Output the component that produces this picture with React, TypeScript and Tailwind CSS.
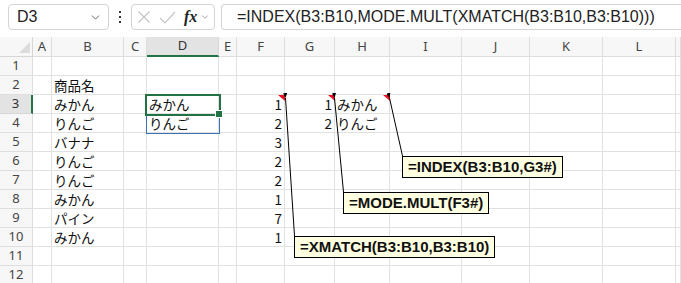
import { ChevronDown } from 'lucide-react'

const COLS = ['A', 'B', 'C', 'D', 'E', 'F', 'G', 'H', 'I', 'J', 'K', 'L', '']

type Cell = { t: string; num?: boolean }
const DATA: Record<number, Record<string, Cell>> = {
  2: { B: { t: '商品名' } },
  3: { B: { t: 'みかん' }, D: { t: 'みかん' }, F: { t: '1', num: true }, G: { t: '1', num: true }, H: { t: 'みかん' } },
  4: { B: { t: 'りんご' }, D: { t: 'りんご' }, F: { t: '2', num: true }, G: { t: '2', num: true }, H: { t: 'りんご' } },
  5: { B: { t: 'バナナ' }, F: { t: '3', num: true } },
  6: { B: { t: 'りんご' }, F: { t: '2', num: true } },
  7: { B: { t: 'りんご' }, F: { t: '2', num: true } },
  8: { B: { t: 'みかん' }, F: { t: '1', num: true } },
  9: { B: { t: 'パイン' }, F: { t: '7', num: true } },
  10: { B: { t: 'みかん' }, F: { t: '1', num: true } },
}

const cellFont = { fontFamily: '"Noto Sans CJK JP", "Noto Sans", sans-serif' }
const uiFont = { fontFamily: '"Noto Sans", "Open Sans", sans-serif' }

function FormulaBar() {
  return (
    <div className="h-[37px] flex items-start pt-[4px] bg-white" style={uiFont}>
      {/* name box */}
      <div className="ml-[8px] w-[101px] h-[26px] border border-[#d4d4d4] rounded-[4px] flex items-center pl-[8px] pr-[6px]">
        <span className="text-[16px] text-[#222] flex-1 leading-none" style={{ fontFamily: '"Liberation Sans", sans-serif' }}>D3</span>
        <ChevronDown className="w-[13px] h-[13px] text-[#555]" strokeWidth={1.6} />
      </div>
      {/* kebab */}
      <div className="w-[22px] h-[26px] flex flex-col items-center justify-center gap-[3px]">
        <div className="w-[2px] h-[2px] bg-[#333]" />
        <div className="w-[2px] h-[2px] bg-[#333]" />
        <div className="w-[2px] h-[2px] bg-[#333]" />
      </div>
      {/* fx box */}
      <div className="w-[84px] h-[26px] border border-[#d4d4d4] rounded-[4px] flex items-center pl-[5px]">
        <svg width="14" height="14" viewBox="0 0 14 14" className="mr-[8px]">
          <path d="M1.5 1.5 L12.5 12.5 M12.5 1.5 L1.5 12.5" stroke="#c4c4c4" strokeWidth="1.2" fill="none" />
        </svg>
        <svg width="17" height="13" viewBox="0 0 17 13" className="mr-[8px]">
          <path d="M1 7 L6 12 L16 1" stroke="#c4c4c4" strokeWidth="1.2" fill="none" />
        </svg>
        <span className="text-[16px] italic font-bold text-[#222] leading-none" style={{ fontFamily: '"Liberation Serif", serif' }}>fx</span>
        <ChevronDown className="w-[10px] h-[10px] text-[#777] ml-[3px]" strokeWidth={1.6} />
      </div>
      {/* formula */}
      <div className="ml-[6px] flex-1 h-[26px] border border-[#d4d4d4] border-r-0 rounded-l-[4px] flex items-center pl-[15px]">
        <span className="text-[16px] text-[#222] whitespace-nowrap" style={{ fontFamily: '"Liberation Sans", sans-serif' }}>
          =INDEX(B3:B10,MODE.MULT(XMATCH(B3:B10,B3:B10)))
        </span>
      </div>
    </div>
  )
}

function Grid() {
  const rows = Array.from({ length: 12 }, (_, i) => i + 1)
  return (
    <div className="grid grid-cols-[33px_19px_72px_23px_72px_18px_48px_50px_55px_72px_68px_73px_73px_1fr] grid-rows-[20px_repeat(12,19px)] overflow-hidden">
      {/* corner */}
      <div className="bg-[#f7f7f7] border-r border-b border-[#d6d6d6] relative">
        <div className="absolute right-[2px] bottom-[3px] w-0 h-0 border-l-[11px] border-l-transparent border-b-[11px] border-b-[#dcdcdc]" />
      </div>
      {COLS.map(c => (
        <div
          key={c || 'M'}
          className={
            c === 'D'
              ? 'bg-[#e3e3e3] border-r border-[#d6d6d6] border-b-2 border-b-[#217346] flex items-center justify-center text-[13px] text-[#333]'
              : 'bg-[#f7f7f7] border-r border-b border-[#dedede] flex items-center justify-center text-[13px] text-[#444]'
          }
          style={uiFont}
        >
          {c}
        </div>
      ))}
      {rows.map(r => (
        <Row key={r} r={r} />
      ))}
    </div>
  )
}

function Row({ r }: { r: number }) {
  const active = r === 3
  return (
    <>
      <div
        className={
          active
            ? 'bg-[#e3e3e3] border-r-2 border-r-[#217346] border-b border-b-[#d6d6d6] flex items-center justify-center text-[13px] text-[#333]'
            : 'bg-[#f7f7f7] border-r border-b border-[#dedede] flex items-center justify-center text-[13px] text-[#444]'
        }
        style={uiFont}
      >
        {r}
      </div>
      {COLS.map(c => {
        const cell = DATA[r]?.[c]
        return (
          <div
            key={c || 'M'}
            className={`relative border-r border-b border-[#e1e1e1] flex items-center whitespace-nowrap text-[13.5px] text-[#111] ${cell?.num ? 'justify-end pr-[2px]' : 'pl-[2px]'}`}
            style={cellFont}
          >
            {cell?.t}
            {r === 3 && (c === 'F' || c === 'G' || c === 'H') && (
              <div className="absolute right-[-1px] top-0 w-0 h-0 border-l-[7px] border-l-transparent border-t-[6px] border-t-[#e81123]" />
            )}
          </div>
        )
      })}
    </>
  )
}

function Comment({ text, className }: { text: string; className: string }) {
  return (
    <div
      className={`absolute h-[22px] bg-[#ffffe1] border border-black flex items-center pl-[5px] pr-[5px] text-[15px] font-bold text-[#111] whitespace-nowrap ${className}`}
      style={{ fontFamily: '"Liberation Sans", sans-serif' }}
    >
      {text}
    </div>
  )
}

export default function App() {
  return (
    <div className="relative w-[681px] h-[283px] overflow-hidden bg-white">
      <FormulaBar />
      <Grid />

      {/* selection D3 + spill range */}
      <div className="absolute left-[146px] top-[114px] w-[74px] h-[20px] border border-[#3b6fb6]" />
      <div className="absolute left-[145px] top-[94px] w-[76px] h-[22px] border-2 border-[#217346]" />
      <div className="absolute left-[216px] top-[111px] w-[6px] h-[6px] bg-[#217346] outline outline-1 outline-white" />

      {/* comment arrows */}
      <svg className="absolute inset-0 pointer-events-none" width="681" height="283">
        <defs>
          <marker id="ah" markerWidth="5" markerHeight="4" refX="0" refY="2" orient="auto-start-reverse" markerUnits="userSpaceOnUse">
            <path d="M0 2 L5 0 L5 4 Z" fill="#000" />
          </marker>
        </defs>
        <line x1="285.5" y1="98" x2="294.5" y2="236" stroke="#000" strokeWidth="1" markerStart="url(#ah)" />
        <line x1="334.5" y1="98" x2="343.5" y2="192" stroke="#000" strokeWidth="1" markerStart="url(#ah)" />
        <line x1="389.5" y1="98" x2="402.5" y2="156" stroke="#000" strokeWidth="1" markerStart="url(#ah)" />
      </svg>

      <Comment text="=INDEX(B3:B10,G3#)" className="left-[402px] top-[156px]" />
      <Comment text="=MODE.MULT(F3#)" className="left-[343px] top-[192px]" />
      <Comment text="=XMATCH(B3:B10,B3:B10)" className="left-[294px] top-[236px]" />
    </div>
  )
}
